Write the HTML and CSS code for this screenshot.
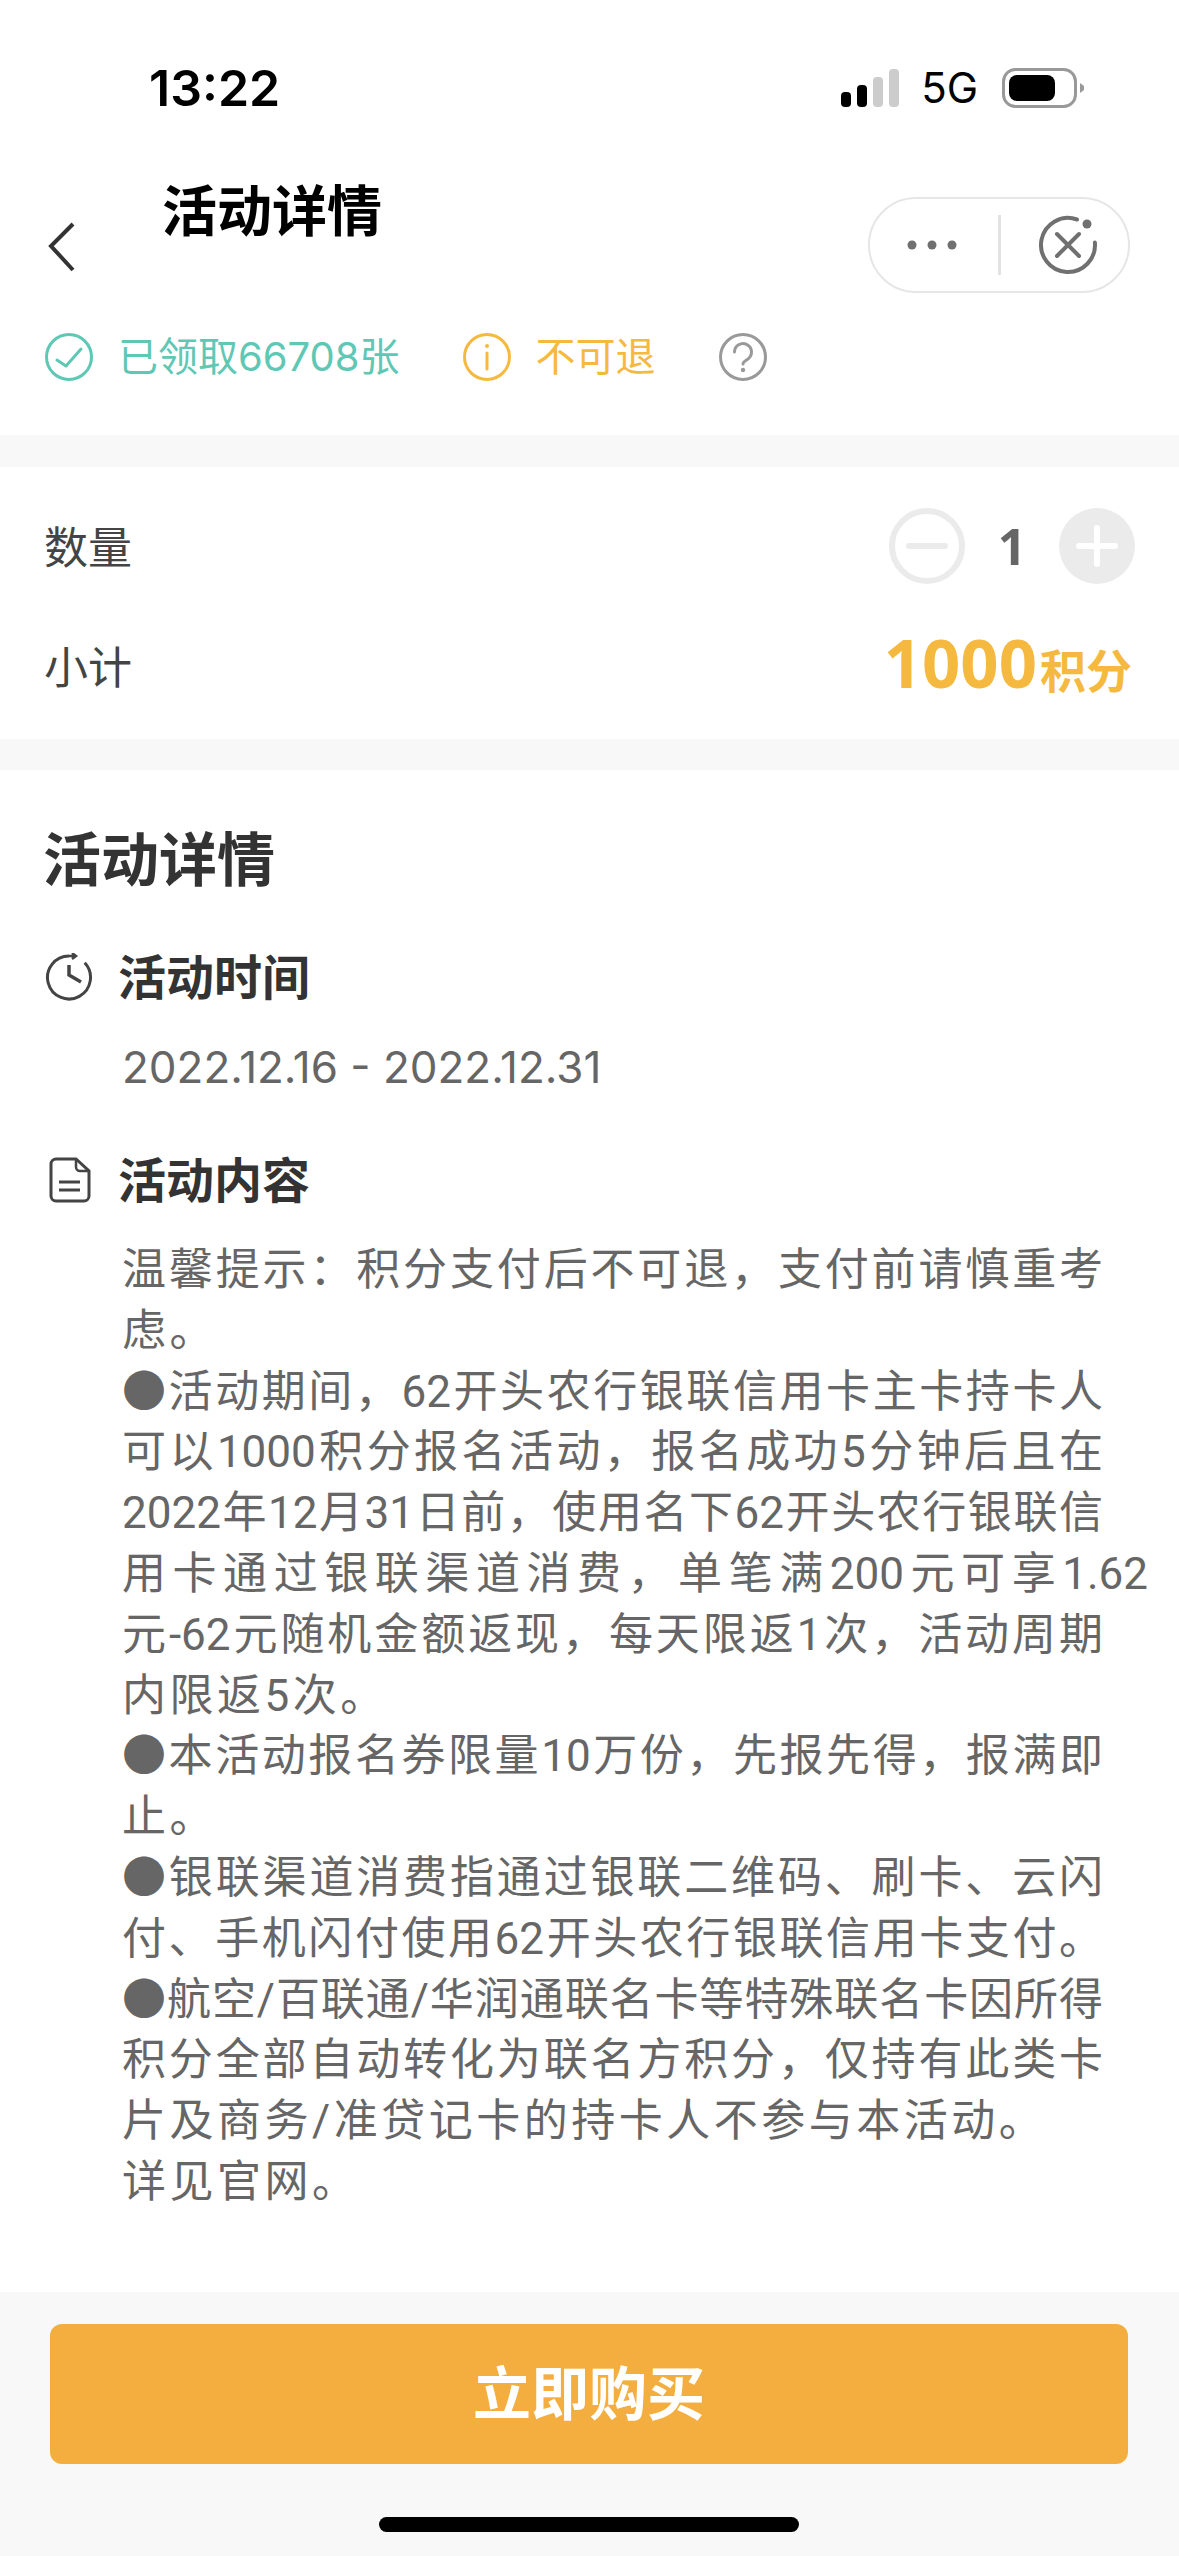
FILE: index.html
```html
<!DOCTYPE html>
<html lang="zh-CN">
<head>
  <meta charset="UTF-8" />
  <meta name="viewport" content="width=device-width, initial-scale=1.0"/>
  <title>活动详情</title>
  <link rel="stylesheet" href="styles.css">
</head>
<body>
  <div class="page">

    <!-- Header -->
    <div class="header">
      <div class="status-bar">
        <span class="time">13:22</span>
        <div class="status-right">
          <svg class="signal" width="58" height="38" viewBox="0 0 58 38">
            <rect x="0" y="23" width="10" height="15" rx="4" fill="#000"/>
            <rect x="16" y="16" width="10" height="22" rx="4" fill="#000"/>
            <rect x="32" y="8" width="10" height="30" rx="4" fill="#ccc"/>
            <rect x="48" y="0" width="10" height="38" rx="4" fill="#ccc"/>
          </svg>
          <span class="network">5G</span>
          <svg class="battery" width="82" height="40" viewBox="0 0 82 40">
            <rect x="1.5" y="1.5" width="72" height="37" rx="12" fill="none" stroke="#999" stroke-width="3"/>
            <rect x="7" y="7" width="46" height="26" rx="8" fill="#000"/>
            <path d="M78 15 L82 18 V22 L78 25 Z" fill="#999"/>
          </svg>
        </div>
      </div>

      <div class="nav">
        <svg class="back" width="30" height="50" viewBox="0 0 30 50">
          <path d="M27 2 L5 24 L27 48" fill="none" stroke="#333" stroke-width="4"/>
        </svg>
        <h1 class="nav-title">活动详情</h1>
        <div class="capsule">
          <div class="capsule-more">
            <svg width="50" height="10" viewBox="0 0 50 10">
              <circle cx="5" cy="5" r="4.5" fill="#707070"/>
              <circle cx="25" cy="5" r="4.5" fill="#707070"/>
              <circle cx="45" cy="5" r="4.5" fill="#707070"/>
            </svg>
          </div>
          <div class="capsule-line"></div>
          <div class="capsule-close">
            <svg width="60" height="60" viewBox="0 0 60 60">
              <path d="M56.9 27.6 A27 27 0 1 1 39 4.5" fill="none" stroke="#707070" stroke-width="4" stroke-linecap="round"/>
              <path d="M19 19 L41 41 M41 19 L19 41" fill="none" stroke="#707070" stroke-width="4" stroke-linecap="round"/>
              <circle cx="49" cy="9" r="4.5" fill="#707070"/>
            </svg>
          </div>
        </div>
      </div>

      <div class="info">
        <div class="info-item green">
          <svg width="48" height="48" viewBox="0 0 48 48">
            <circle cx="24" cy="24" r="22.5" fill="none" stroke="#5fc8b5" stroke-width="3"/>
            <path d="M12 27 L21 33 L36 16" fill="none" stroke="#5fc8b5" stroke-width="3" stroke-linecap="round" stroke-linejoin="round"/>
          </svg>
          <span>已领取66708张</span>
        </div>
        <div class="info-item yellow">
          <svg width="48" height="48" viewBox="0 0 48 48">
            <circle cx="24" cy="24" r="22.5" fill="none" stroke="#f5b93f" stroke-width="3"/>
            <circle cx="24" cy="13" r="2" fill="#f5b93f"/>
            <path d="M24 20 V36" fill="none" stroke="#f5b93f" stroke-width="3" stroke-linecap="round"/>
          </svg>
          <span>不可退</span>
        </div>
        <svg width="48" height="48" viewBox="0 0 48 48">
          <circle cx="24" cy="24" r="22.5" fill="none" stroke="#999" stroke-width="3"/>
          <path d="M15.5 19 a8.5 8.5 0 1 1 13.5 7 c-3 2 -5 3 -5 5" fill="none" stroke="#999" stroke-width="3" stroke-linecap="round"/>
          <circle cx="24" cy="37" r="2.2" fill="#999"/>
        </svg>
      </div>
    </div>

    <!-- Quantity -->
    <div class="quantity">
      <div class="row">
        <span class="row-label">数量</span>
        <div class="stepper">
          <svg width="76" height="76" viewBox="0 0 76 76">
            <circle cx="38" cy="38" r="35" fill="none" stroke="#ebebeb" stroke-width="6"/>
            <path d="M20 38 H56" stroke="#ebebeb" stroke-width="6" stroke-linecap="round"/>
          </svg>
          <span class="count">1</span>
          <svg width="76" height="76" viewBox="0 0 76 76">
            <circle cx="38" cy="38" r="38" fill="#ebebeb"/>
            <path d="M20 38 H56 M38 20 V56" stroke="#fff" stroke-width="6" stroke-linecap="round"/>
          </svg>
        </div>
      </div>
      <div class="row row-total">
        <span class="row-label">小计</span>
        <div class="price"><span class="price-num">1000</span><span class="price-unit">积分</span></div>
      </div>
    </div>

    <!-- Details -->
    <div class="details">
      <h2 class="details-title">活动详情</h2>

      <div class="sub-title first">
        <svg width="48" height="48" viewBox="0 0 48 48">
          <path d="M24 3 A21.5 21.5 0 1 0 39.7 9.8" fill="none" stroke="#444" stroke-width="3"/>
          <path d="M24 3 H30 M27 0 L31 3 L27 6" fill="none" stroke="#444" stroke-width="2.5"/>
          <path d="M24 12 V22 L36 29" fill="none" stroke="#444" stroke-width="3.5"/>
        </svg>
        <span>活动时间</span>
      </div>
      <p class="date">2022.12.16 - 2022.12.31</p>

      <div class="sub-title second">
        <svg width="48" height="48" viewBox="0 0 48 48">
          <path d="M11 3 H31 L44 15 V40 a5 5 0 0 1 -5 5 H11 a5 5 0 0 1 -5 -5 V8 a5 5 0 0 1 5 -5 Z" fill="none" stroke="#444" stroke-width="3"/>
          <path d="M31 3 V11 a4 4 0 0 0 4 4 H44" fill="none" stroke="#444" stroke-width="2.5"/>
          <path d="M14 26 H35 M14 34 H35" fill="none" stroke="#444" stroke-width="3"/>
        </svg>
        <span>活动内容</span>
      </div>
      <div class="content">
        <div class="line">温馨提示&#65306;积分支付后不可退&#65292;支付前请慎重考</div>
        <div class="line-end">虑。</div>
        <div class="line">●活动期间&#65292;62开头农行银联信用卡主卡持卡人</div>
        <div class="line">可以1000积分报名活动&#65292;报名成功5分钟后且在</div>
        <div class="line">2022年12月31日前&#65292;使用名下62开头农行银联信</div>
        <div class="line line-wide">用卡通过银联渠道消费&#65292;单笔满200元可享1.62</div>
        <div class="line">元-62元随机金额返现&#65292;每天限返1次&#65292;活动周期</div>
        <div class="line-end">内限返5次。</div>
        <div class="line">●本活动报名券限量10万份&#65292;先报先得&#65292;报满即</div>
        <div class="line-end">止。</div>
        <div class="line">●银联渠道消费指通过银联二维码、刷卡、云闪</div>
        <div class="line">付、手机闪付使用62开头农行银联信用卡支付。</div>
        <div class="line">●航空/百联通/华润通联名卡等特殊联名卡因所得</div>
        <div class="line">积分全部自动转化为联名方积分&#65292;仅持有此类卡</div>
        <div class="line-end">片及商务/准贷记卡的持卡人不参与本活动。</div>
        <div class="line-end">详见官网。</div>
      </div>
    </div>

    <!-- Footer -->
    <div class="footer">
      <button class="buy">立即购买</button>
      <div class="home-bar"></div>
    </div>

  </div>
</body>
</html>
```

FILE: styles.css
```css
* {
  box-sizing: border-box;
  margin: 0;
  padding: 0;
  font-family: Inter, "Noto Sans CJK SC", sans-serif;
}
body {
  background-color: #f8f8f8;
}
.page {
  width: 1179px;
  height: 2556px;
  display: flex;
  flex-direction: column;
  overflow: hidden;
}
.header {
  height: 435px;
  background-color: #fff;
}
.status-bar {
  height: 150px;
  padding: 63px 95px 0 149px;
  display: flex;
  justify-content: space-between;
  align-items: flex-start;
}
.time {
  font-size: 50px;
  line-height: 50px;
  font-weight: 600;
  color: #000;
}
.status-right {
  display: flex;
  align-items: center;
  gap: 24px;
  margin-top: 5px;
}
.signal {
  margin-right: -2px;
}
.network {
  font-size: 42px;
  line-height: 40px;
  color: #000;
}
.nav {
  height: 160px;
  padding: 0 49px 0 46px;
  display: flex;
  align-items: flex-start;
}
.back {
  margin-top: 72px;
}
.nav-title {
  margin-left: 86px;
  margin-top: 26px;
  font-size: 55px;
  line-height: 70px;
  font-weight: 700;
  color: #000;
}
.capsule {
  margin-left: auto;
  margin-top: 47px;
  width: 262px;
  height: 96px;
  border: 2px solid #e6e6e6;
  border-radius: 48px;
  display: flex;
  align-items: center;
}
.capsule-more {
  width: 128px;
  padding-right: 4px;
  display: flex;
  justify-content: center;
}
.capsule-close {
  flex: 1;
  padding-left: 8px;
  display: flex;
  justify-content: center;
}
.capsule-line {
  width: 2.5px;
  height: 60px;
  background-color: #e2e2e2;
}
.info {
  height: 125px;
  padding: 23px 0 0 45px;
  display: flex;
  align-items: flex-start;
  gap: 63px;
}
.info-item {
  display: flex;
  align-items: center;
  gap: 25px;
  font-size: 40px;
  line-height: 48px;
}
.green {
  color: #5fc8b5;
}
.yellow {
  color: #f5b93f;
}
.quantity {
  margin-top: 32px;
  height: 272px;
  padding: 18px 44px 10px 45px;
  background-color: #fff;
}
.row {
  height: 122px;
  display: flex;
  justify-content: space-between;
  align-items: center;
}
.row-total {
  height: 110px;
}
.row-label {
  margin-bottom: 3px;
  margin-left: -1px;
  font-size: 44px;
  color: #444;
}
.row-total .row-label {
  margin-bottom: 0;
  margin-top: 5px;
}
.stepper {
  display: flex;
  align-items: center;
}
.count {
  width: 94px;
  text-align: center;
  font-family: "Noto Sans", sans-serif;
  font-size: 50px;
  font-weight: 700;
  color: #666;
}
.price {
  display: flex;
  align-items: baseline;
  color: #f5b93f;
}
.price-num {
  font-family: "Noto Sans", sans-serif;
  font-size: 67px;
  font-weight: 700;
}
.price-unit {
  margin-left: 3px;
  margin-right: 3px;
  font-size: 46px;
  font-weight: 600;
}
.details {
  margin-top: 31px;
  flex: 1;
  padding: 50px 45px 0;
  background-color: #fff;
}
.details-title {
  margin-left: -2px;
  font-size: 58px;
  line-height: 80px;
  font-weight: 600;
  color: #333;
}
.sub-title {
  height: 60px;
  display: flex;
  align-items: center;
  gap: 25px;
  font-size: 48px;
  font-weight: 600;
  color: #333;
}
.sub-title span {
  margin-bottom: 6px;
}
.sub-title.first {
  margin-top: 47px;
}
.sub-title.second {
  margin-top: 53px;
}
.date {
  margin-top: 30px;
  padding-left: 77px;
  font-size: 44px;
  line-height: 60px;
  color: #666;
}
.content {
  margin-top: 30px;
  padding-left: 77px;
  font-family: Roboto, "Noto Sans CJK SC", sans-serif;
  font-size: 44px;
  line-height: 60.8px;
  color: #666;
}
.content div {
  font-family: inherit;
}
.line {
  width: 981px;
  text-align: justify;
  text-align-last: justify;
}
.line-wide {
  width: 1026px;
}
.line-end {
  letter-spacing: 3.5px;
}
.footer {
  height: 264px;
  padding: 32px 51px 0 50px;
}
.buy {
  display: block;
  width: 100%;
  height: 140px;
  padding-bottom: 8px;
  border: none;
  border-radius: 12px;
  background-color: #f3ae3f;
  color: #fff;
  font-size: 58px;
  font-weight: 700;
}
.home-bar {
  width: 420px;
  height: 15px;
  margin: 53px auto 0;
  border-radius: 8px;
  background-color: #000;
}
```
